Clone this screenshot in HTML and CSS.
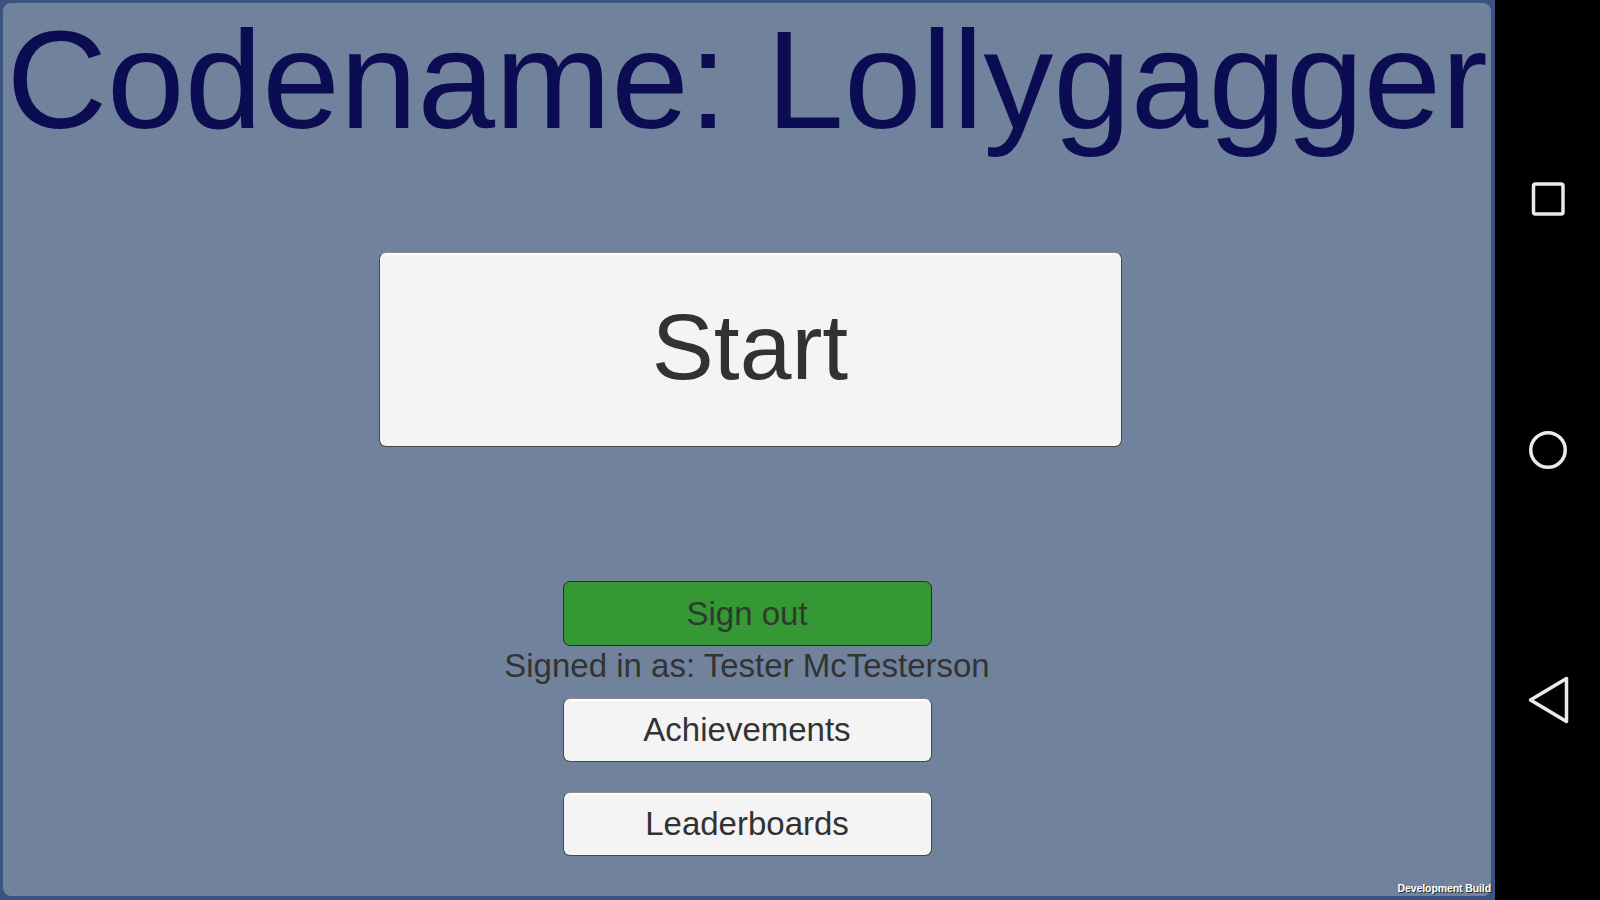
FILE: index.html
```html
<!DOCTYPE html>
<html>
<head>
<meta charset="utf-8">
<link rel="stylesheet" href="styles.css">
</head>
<body>
<div class="screen">
  <div class="game">
    <div class="panel">
      <h1 class="title">Codename: Lollygagger</h1>
      <button class="btn btn-start">Start</button>
      <button class="btn btn-small btn-green">Sign out</button>
      <div class="signed">Signed in as: Tester McTesterson</div>
      <button class="btn btn-small btn-ach">Achievements</button>
      <button class="btn btn-small btn-lead">Leaderboards</button>
      <div class="devbuild">Development Build</div>
    </div>
  </div>
  <div class="nav">
    <svg class="ico ico-square" width="40" height="40" viewBox="0 0 40 40"><rect x="5.5" y="5" width="29.5" height="30" rx="2" fill="none" stroke="#ebebeb" stroke-width="3.5"/></svg>
    <svg class="ico ico-circle" width="40" height="40" viewBox="0 0 40 40"><circle cx="20" cy="20" r="17.25" fill="none" stroke="#ebebeb" stroke-width="3.5"/></svg>
    <svg class="ico ico-back" width="44" height="52" viewBox="0 0 44 52"><path d="M3.5 26 L39.5 4.5 L39.5 47.5 Z" fill="none" stroke="#ebebeb" stroke-width="3.5" stroke-linejoin="round"/></svg>
  </div>
</div>
</body>
</html>
```

FILE: styles.css
```css
* { box-sizing: border-box; }
html, body { margin: 0; padding: 0; }
body {
  width: 1600px;
  height: 900px;
  overflow: hidden;
  background: #000;
  font-family: "Liberation Sans", Arial, sans-serif;
}
.screen {
  display: flex;
  width: 1600px;
  height: 900px;
}
.game {
  width: 1495px;
  height: 900px;
  background: #3a5380;
  padding: 3px 4px 4px 3px;
}
.panel {
  position: relative;
  height: 100%;
  background: #71829c;
  border-radius: 8px;
  display: flex;
  flex-direction: column;
  align-items: center;
}
.title {
  margin: 7px 0 0 0;
  font-family: "Liberation Sans", Arial, sans-serif;
  font-weight: normal;
  font-size: 139.5px;
  line-height: 140px;
  color: #0c0c52;
  white-space: nowrap;
  letter-spacing: 0;
}
.btn {
  font-family: "Liberation Sans", Arial, sans-serif;
  color: #323232;
  background: #f4f4f4;
  border: 1px solid #464646;
  border-top-color: #8a8a8a;
  box-shadow: inset 0 2px 0 #ffffff;
  border-radius: 7px;
  display: flex;
  align-items: center;
  justify-content: center;
  padding: 0;
  cursor: pointer;
}
.btn-start {
  margin-top: 102px;
  margin-left: 6px;
  width: 743px;
  height: 195px;
  font-size: 93px;
  padding-bottom: 4px;
}
.btn-small {
  width: 369px;
  height: 64px;
  font-size: 33px;
}
.btn-green {
  margin-top: 134px;
  height: 65px;
  background: #369834;
  border-color: #1d331d;
  box-shadow: none;
  color: #2f3a2f;
}
.signed {
  height: 40px;
  line-height: 40px;
  font-size: 33px;
  color: #333333;
  white-space: nowrap;
}
.btn-ach { margin-top: 12px; }
.btn-lead { margin-top: 30px; }
.devbuild {
  position: absolute;
  right: 0;
  bottom: 1px;
  font-family: "Liberation Sans", Arial, sans-serif;
  font-weight: bold;
  font-size: 10.5px;
  line-height: 13px;
  color: #ffffff;
  text-shadow: 1px 1px 0 #2a2a2a;
  letter-spacing: -0.1px;
}
.nav {
  width: 105px;
  height: 900px;
  background: #000;
  display: flex;
  flex-direction: column;
  align-items: center;
  padding-top: 179px;
}
.ico { display: block; flex: none; }
.ico-circle { margin-top: 211px; }
.ico-back { margin-top: 204px; margin-left: 2px; }
```
